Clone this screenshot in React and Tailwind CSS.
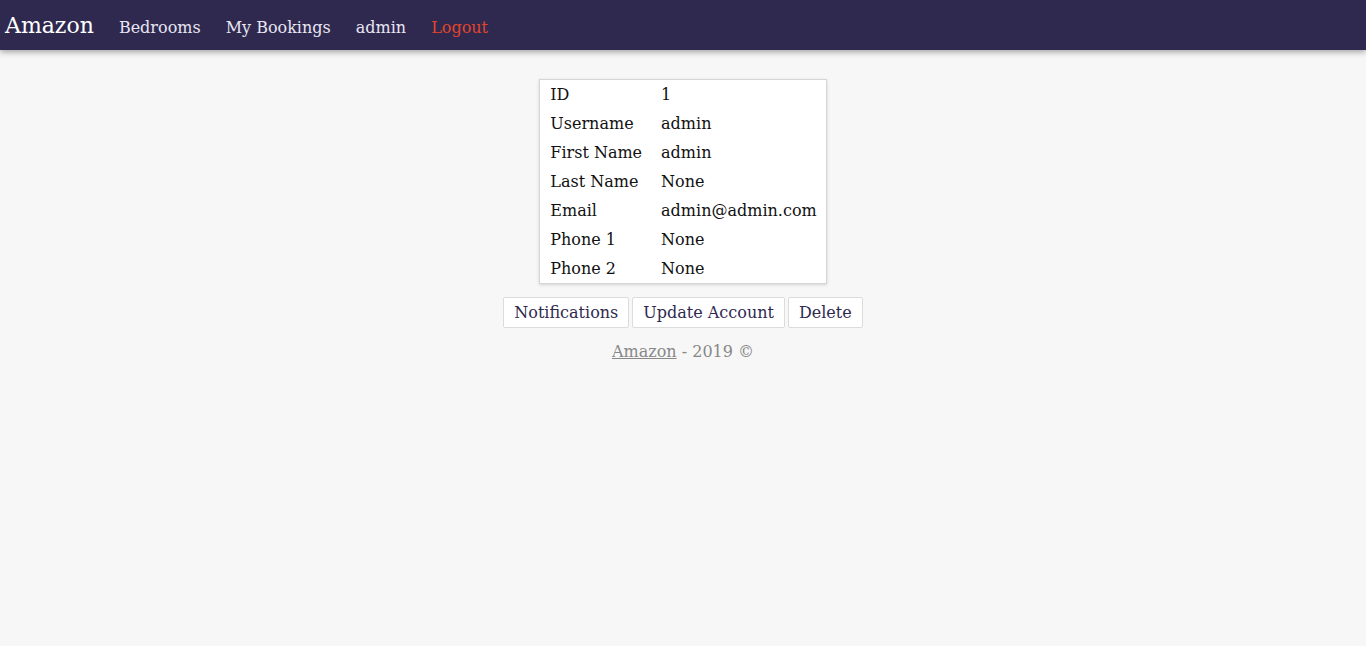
import React from 'react';

const rows = [
    ['ID', '1'],
    ['Username', 'admin'],
    ['First Name', 'admin'],
    ['Last Name', 'None'],
    ['Email', 'admin@admin.com'],
    ['Phone 1', 'None'],
    ['Phone 2', 'None'],
];

const App = () => {
    return (
        <div className="min-h-screen bg-[#f7f7f7] font-['DejaVu_Serif',serif]">
            {/* Navbar */}
            <nav className="h-[50px] bg-[#2f2950] flex items-center gap-[25px] px-[5px] shadow-[0_2px_6px_rgba(0,0,0,0.35)]">
                <span className="text-[22px] text-white leading-none mt-[1px]">Amazon</span>
                <a className="text-[16px] text-[#e8e6f2] mt-[5px]">Bedrooms</a>
                <a className="text-[16px] text-[#e8e6f2] mt-[5px]">My Bookings</a>
                <a className="text-[16px] text-[#e8e6f2] mt-[5px]">admin</a>
                <a className="text-[16px] text-[#e2452b] mt-[5px]">Logout</a>
            </nav>

            {/* Account details */}
            <div className="flex flex-col items-center pt-[29px]">
                <div className="bg-white border border-[#d6d6d6] shadow-[0_1px_3px_rgba(0,0,0,0.15)]">
                    <table className="text-[16px] text-[#111]">
                        <tbody>
                            {rows.map(([k, v]) => (
                                <tr key={k}>
                                    <td className="pl-[10px] pr-[9px] h-[29px] leading-[19px] whitespace-nowrap">{k}</td>
                                    <td className="pl-[10px] pr-[9px] h-[29px] leading-[19px] whitespace-nowrap">{v}</td>
                                </tr>
                            ))}
                        </tbody>
                    </table>
                </div>

                <div className="flex gap-[3px] mt-[13px]">
                    {['Notifications', 'Update Account', 'Delete'].map((b) => (
                        <button key={b} className="h-[31px] pt-[1px] px-[10px] bg-white border border-[#dcdcdc] rounded-[2px] text-[16px] text-[#2f2950]">
                            {b}
                        </button>
                    ))}
                </div>

                <p className="mt-[12px] text-[16px] text-[#888]">
                    <a className="underline">Amazon</a> - 2019 ©
                </p>
            </div>
        </div>
    );
};

export default App;
